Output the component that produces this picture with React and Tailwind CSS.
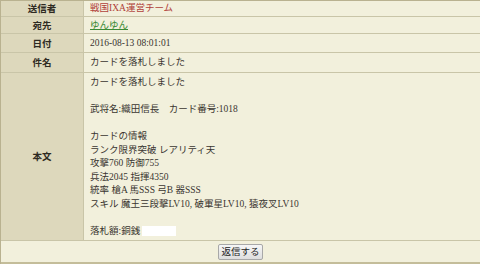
export default function App() {
  const body = [
    "カードを落札しました",
    "",
    "武将名:織田信長　カード番号:1018",
    "",
    "カードの情報",
    "ランク限界突破 レアリティ天",
    "攻撃760 防御755",
    "兵法2045 指揮4350",
    "統率 槍A 馬SSS 弓B 器SSS",
    "スキル 魔王三段撃LV10, 破軍星LV10, 猿夜叉LV10",
    "",
  ];
  const label =
    "w-[83px] shrink-0 border-r border-[#c9c5a8] bg-[#ddd8bc] flex items-center justify-center font-bold text-[9.5px] text-[#2e2a22] font-['Noto_Sans_CJK_JP',sans-serif]";
  const value =
    "flex-1 bg-[#f2f0dc] flex items-center pl-[6px] text-[9.5px] text-[#3a3530] font-['Liberation_Serif','Noto_Sans_CJK_JP',serif]";
  return (
    <div className="w-[480px] h-[264px] overflow-hidden bg-[#f2f0dc]">
      <div className="border-t border-l border-[#b9b290]">
        <div className="flex h-[16px] border-b border-[#c9c5a8]">
          <div className={label}>送信者</div>
          <div className={value}>
            <span className="text-[#b0403a]">戦国IXA運営チーム</span>
          </div>
        </div>
        <div className="flex h-[17px] border-b border-[#c9c5a8]">
          <div className={label}>宛先</div>
          <div className={value}>
            <span className="text-[#3a8a35] underline">ゆんゆん</span>
          </div>
        </div>
        <div className="flex h-[19px] border-b border-[#c9c5a8]">
          <div className={label}>日付</div>
          <div className={value}>2016-08-13 08:01:01</div>
        </div>
        <div className="flex h-[20px] border-b border-[#c9c5a8]">
          <div className={label}>件名</div>
          <div className={value}>カードを落札しました</div>
        </div>
        <div className="flex h-[168px] border-b border-[#c9c5a8]">
          <div className={label}>本文</div>
          <div className="flex-1 bg-[#f2f0dc] pl-[6px] pt-[3px] text-[9.5px] leading-[13.5px] text-[#3a3530] font-['Liberation_Serif','Noto_Sans_CJK_JP',serif]">
            {body.map((l, i) => (
              <div key={i} className="h-[13.5px] whitespace-pre">
                {l}
              </div>
            ))}
            <div className="h-[13.5px] flex items-center">
              <span>落札額:銅銭</span>
              <span className="ml-[2px] w-[34px] h-[10px] bg-white" />
            </div>
          </div>
        </div>
        <div className="flex h-[23px] items-center justify-center bg-[#f2f0dc] border-b-2 border-[#c4bd9a]">
          <button className="h-[16px] px-[2px] flex items-center border border-[#a8a8a8] rounded-[2px] bg-gradient-to-b from-[#f6f6f6] to-[#dedede] text-[9.5px] text-[#222] font-['Noto_Sans_CJK_JP',sans-serif] leading-none">
            返信する
          </button>
        </div>
      </div>
    </div>
  );
}
